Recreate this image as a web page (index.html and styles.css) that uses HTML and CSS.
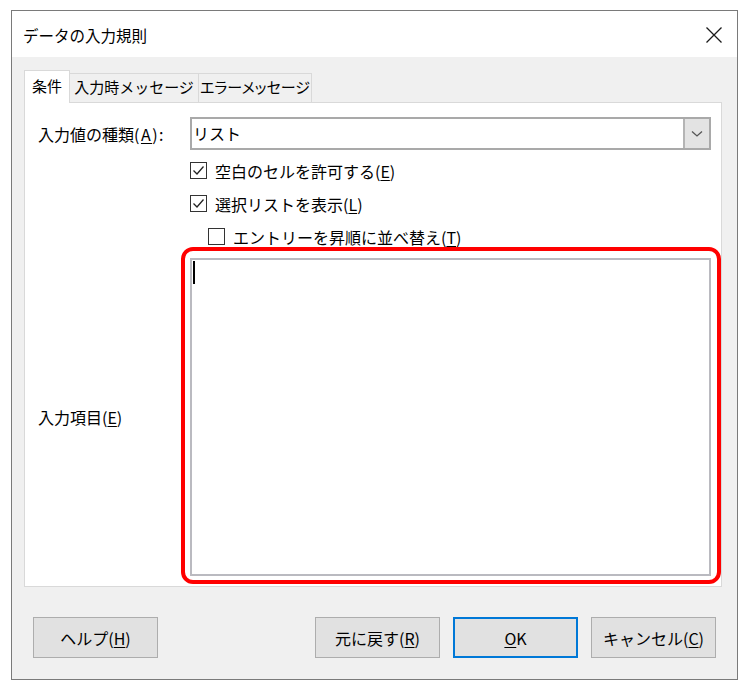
FILE: index.html
```html
<!DOCTYPE html>
<html lang="ja">
<head>
<meta charset="utf-8">
<title>データの入力規則</title>
<link rel="stylesheet" href="styles.css">
</head>
<body>
<div class="window">
  <div class="titlebar">
    <span class="title">データの入力規則</span>
    <svg class="close" width="16" height="16" viewBox="0 0 16 16"><path d="M0.5 0.5 L15.5 15.5 M15.5 0.5 L0.5 15.5" stroke="#1a1a1a" stroke-width="1.3" fill="none"/></svg>
  </div>
  <div class="body">
    <div class="tabs">
      <div class="tab tab-active">条件</div>
      <div class="tab tab-msg">入力時メッセージ</div>
      <div class="tab tab-err">エラーメッセージ</div>
    </div>
    <div class="panel">
      <div class="label label-type">入力値の種類<span class="mnemo">(<u>A</u>):</span></div>
      <div class="combo">
        <span class="combo-text">リスト</span>
        <span class="combo-btn"><svg width="12" height="8" viewBox="0 0 12 8"><path d="M1 1.5 L6 6 L11 1.5" stroke="#555" stroke-width="1.3" fill="none"/></svg></span>
      </div>
      <div class="checks">
        <div class="check"><span class="box"><svg width="15" height="15" viewBox="0 0 15 15"><path d="M2.5 7.5 L6 11 L12.5 3.5" stroke="#222" stroke-width="1.3" fill="none"/></svg></span><span>空白のセルを許可する(<u>E</u>)</span></div>
        <div class="check"><span class="box"><svg width="15" height="15" viewBox="0 0 15 15"><path d="M2.5 7.5 L6 11 L12.5 3.5" stroke="#222" stroke-width="1.3" fill="none"/></svg></span><span>選択リストを表示(<u>L</u>)</span></div>
        <div class="check check-indent"><span class="box"></span><span>エントリーを昇順に並べ替え(<u>T</u>)</span></div>
      </div>
      <div class="label label-items">入力項目(<u>E</u>)</div>
      <div class="entry">
        <span class="caret"></span>
        <div class="highlight"></div>
      </div>
    </div>
    <div class="buttons">
      <button class="btn">ヘルプ(<u>H</u>)</button>
      <div class="spacer"></div>
      <button class="btn">元に戻す(<u>R</u>)</button>
      <button class="btn btn-default"><u>O</u>K</button>
      <button class="btn">キャンセル(<u>C</u>)</button>
    </div>
  </div>
</div>
</body>
</html>
```
FILE: styles.css
```css
html, body {
  margin: 0;
  padding: 0;
  background: #ffffff;
}
body {
  font-family: "Noto Sans CJK JP", "Noto Sans", sans-serif;
  font-size: 16px;
  color: #000;
}
u {
  text-decoration: underline;
  text-underline-offset: 2px;
  text-decoration-thickness: 1px;
}
.window {
  margin: 10px 0 0 11px;
  width: 727px;
  height: 670px;
  box-sizing: border-box;
  border: 1px solid #7a7a7a;
  background: #f0f0f0;
  display: flex;
  flex-direction: column;
}
.titlebar {
  height: 46px;
  background: #ffffff;
  display: flex;
  align-items: center;
  padding: 2px 15px 0 11px;
  box-sizing: border-box;
}
.title {
  flex: 1;
  font-size: 15.5px;
  line-height: 20px;
}
.close {
  display: block;
}
.body {
  flex: 1;
  padding: 13px 15px 0 12px;
  display: flex;
  flex-direction: column;
}
.tabs {
  display: flex;
  align-items: flex-end;
  height: 32px;
  position: relative;
  z-index: 1;
}
.tab {
  box-sizing: border-box;
  height: 29px;
  border: 1px solid #d9d9d9;
  border-bottom: none;
  background: #f0f0f0;
  font-size: 15px;
  line-height: 26px;
  text-align: center;
  white-space: nowrap;
  overflow: hidden;
}
.tab-active {
  width: 46px;
  height: 33px;
  margin-bottom: -1px;
  background: #ffffff;
  line-height: 30px;
}
.tab-msg {
  width: 129px;
  border-left: none;
}
.tab-err {
  width: 113px;
  border-left: none;
  font-feature-settings: "palt";
}
.panel {
  width: 698px;
  box-sizing: border-box;
  background: #ffffff;
  border: 1px solid #d9d9d9;
  padding: 14px 10px 10px 11px;
  display: grid;
  grid-template-columns: 154px 521px;
  grid-template-rows: 33px auto 318px;
}
.label {
  line-height: 20px;
}
.label-type {
  align-self: center;
  padding-left: 2px;
}
.mnemo {
  letter-spacing: 1.5px;
}
.combo {
  box-sizing: border-box;
  height: 33px;
  border: 2px solid #a9a9a9;
  display: flex;
  align-items: stretch;
  background: #fff;
}
.combo-text {
  flex: 1;
  padding-left: 1px;
  line-height: 29px;
}
.combo-btn {
  width: 24px;
  border-left: 2px solid #b4b4b4;
  background: #e3e3e3;
  display: flex;
  align-items: center;
  justify-content: center;
}
.combo-btn svg {
  display: block;
}
.checks {
  grid-column: 2;
  margin-top: 4px;
  margin-bottom: 5px;
}
.check {
  height: 33px;
  display: flex;
  align-items: center;
  gap: 8px;
  line-height: 20px;
  white-space: nowrap;
}
.check-indent {
  margin-left: 18px;
}
.box {
  width: 17px;
  height: 17px;
  box-sizing: border-box;
  border: 1px solid #333;
  background: #fff;
  display: flex;
  align-items: center;
  justify-content: center;
}
.box svg {
  display: block;
}
.label-items {
  grid-column: 1;
  align-self: center;
  padding-left: 2px;
}
.entry {
  grid-column: 2;
  position: relative;
  box-sizing: border-box;
  border: 2px solid #babac0;
  background: #fff;
}
.caret {
  display: block;
  width: 2px;
  height: 23px;
  margin: 1px 0 0 1px;
  background: #000;
}
.highlight {
  position: absolute;
  top: -13px;
  left: -11px;
  right: -12px;
  bottom: -10px;
  border: 4px solid #ff0000;
  border-radius: 12px;
  pointer-events: none;
}
.buttons {
  margin-top: 30px;
  padding: 0 6px 0 9px;
  display: flex;
  gap: 13px;
}
.spacer {
  flex: 1;
}
.btn {
  width: 125px;
  height: 41px;
  box-sizing: border-box;
  border: 1px solid #adadad;
  background: #e1e1e1;
  font-family: "Noto Sans CJK JP", "Noto Sans", sans-serif;
  font-size: 16px;
  color: #000;
  padding: 0;
  line-height: 20px;
}
.btn-default {
  border: 2px solid #0078d7;
}
```
